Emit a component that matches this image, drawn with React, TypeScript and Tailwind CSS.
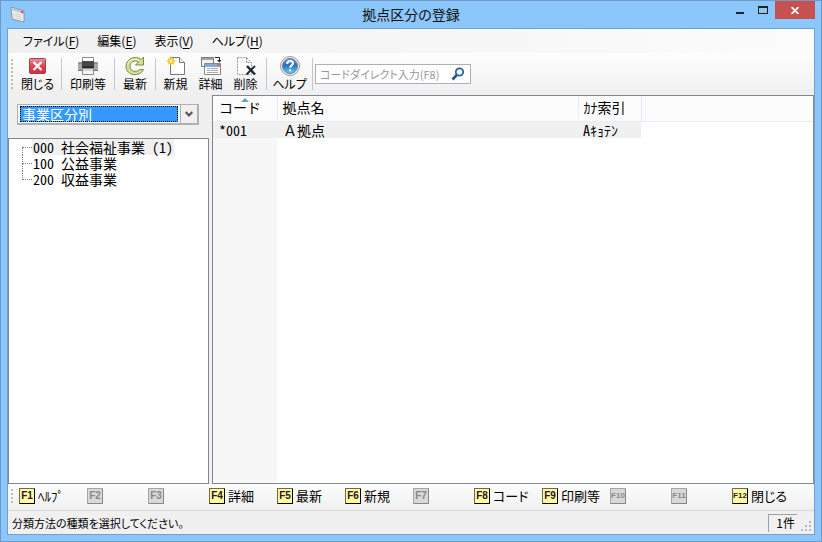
import type { ReactNode } from "react";
import { useState } from "react";
import clsx from "clsx";

const UI_FONT = "font-['Noto_Sans_CJK_JP',sans-serif] [font-feature-settings:'palt']";
const GRID_FONT = "font-['Noto_Sans_CJK_JP',monospace] [font-feature-settings:'hwid']";

const MENUS = [
  { label: "ファイル", accel: "F" },
  { label: "編集", accel: "E" },
  { label: "表示", accel: "V" },
  { label: "ヘルプ", accel: "H" },
];

const TREE = ["000 社会福祉事業 (1)", "100 公益事業", "200 収益事業"];

const FUNCTION_KEYS = [
  { key: "F1", label: "ﾍﾙﾌﾟ" },
  { key: "F2" },
  { key: "F3" },
  { key: "F4", label: "詳細" },
  { key: "F5", label: "最新" },
  { key: "F6", label: "新規" },
  { key: "F7" },
  { key: "F8", label: "コード" },
  { key: "F9", label: "印刷等" },
  { key: "F10" },
  { key: "F11" },
  { key: "F12", label: "閉じる" },
];

function AppIcon() {
  return (
    <svg width="16" height="17" viewBox="0 0 16 17" aria-hidden="true">
      <path d="M1 1l13 4v11L2 13z" fill="#f1f1ee" stroke="#8295aa" />
      <path d="M1.500 1.800l12 3.700v2.300l-12-3.600z" fill="#b9c9da" />
      <path d="M11 5.800l2.500.8" stroke="#c8556a" strokeWidth="2" />
      <path d="M4 7v5M5.500 7.500l6.500 2M5.500 9.500l6.500 2M5.500 11.500l6.500 2" stroke="#cdcdc8" fill="none" />
    </svg>
  );
}

function CloseIcon() {
  return (
    <svg width="20" height="20" viewBox="0 0 20 20" aria-hidden="true">
      <defs>
        <linearGradient id="closeRed" x1="0" y1="0" x2="0" y2="1">
          <stop offset="0" stopColor="#f0929a" />
          <stop offset=".5" stopColor="#dc4555" />
          <stop offset="1" stopColor="#e0293c" />
        </linearGradient>
      </defs>
      <rect x="1.500" y="2.500" width="16" height="15" rx="1" fill="url(#closeRed)" stroke="#94474b" />
      <path d="M5.500 6l8 8M13.500 6l-8 8" stroke="#fff" strokeWidth="2.400" />
    </svg>
  );
}

function PrinterIcon() {
  return (
    <svg width="20" height="20" viewBox="0 0 20 20" aria-hidden="true">
      <path d="M4.500 1.500h11v5h-11z" fill="#fff" stroke="#8a8a8a" />
      <path d="M1 6h18l1 1v8H0V7z" fill="#8e8e8e" />
      <path d="M0 8h4v7H0zM16 8h4v7h-4z" fill="#a9a9a9" />
      <path d="M4 5h12v6H4z" fill="#484848" />
      <path d="M4 10h12v2H4z" fill="#2e2e2e" />
      <path d="M0 14h20v1H0z" fill="#777" />
      <path d="M4.500 12.500h11v6h-11z" fill="#fafafa" stroke="#8a8a8a" />
      <path d="M5 13h10v2H5z" fill="#d6d6d6" />
    </svg>
  );
}

function RefreshIcon() {
  return (
    <svg width="20" height="20" viewBox="0 0 20 20" aria-hidden="true">
      <path
        d="M18.500 1v8H10.500l3-3C9.500 3.500 5 6 5 10.500c0 5 6.500 6.500 9.500 3h4C15 21.500 1 20 1 10.500 1 2.500 10.500-1 16 3.500z"
        fill="#d3de8e"
        stroke="#7c8848"
      />
      <path d="M2.500 9C3.500 4 9 1.500 14 4.500" stroke="#f1f7d2" fill="none" />
    </svg>
  );
}

function NewIcon() {
  return (
    <svg width="20" height="20" viewBox="0 0 20 20" aria-hidden="true">
      <path d="M4.500 1.500h9l5 5v12h-14z" fill="#fff" stroke="#777" />
      <path d="M13.500 1.500v5h5" fill="#eee" stroke="#777" />
      <path
        d="M5 0l1 3 2.500-1.500L7.500 4 10 5 7.500 6.200l1 2.500L6 7.500 5 10 4 7.500 1.500 8.700l1-2.500L0 5l2.500-1-1-2.500L4 3z"
        fill="#f8c91c"
      />
      <circle cx="5" cy="5" r="1.500" fill="#fff39a" />
    </svg>
  );
}

function DetailIcon() {
  return (
    <svg width="20" height="20" viewBox="0 0 20 20" aria-hidden="true">
      <path d="M.5 1.500h12v9H.5z" fill="#f4f4f4" stroke="#777" />
      <path d="M1 2h11v2H1z" fill="#a6a6a6" />
      <path d="M14 1.500h4.500v3" stroke="#222" fill="none" />
      <path d="M16 4h4.500l-2.200 2.500z" fill="#222" />
      <path d="M3.500 7.500h16v11h-16z" fill="#fff" stroke="#888" />
      <path d="M4 8h15v3H4z" fill="#83a9d8" />
      <path d="M16 8h3v2h-3z" fill="#dc6860" />
      <path d="M6 12.500h3M10 12.500h7M6 14.500h3M10 14.500h7M6 16.500h11" stroke="#aaa" />
    </svg>
  );
}

function DeleteIcon() {
  return (
    <svg width="20" height="20" viewBox="0 0 20 20" aria-hidden="true">
      <path d="M1.500 1.500h9l5 5v12h-14z" fill="#fbfbfb" stroke="#999" strokeDasharray="2 1" />
      <path d="M10.500 1.500v5h5" fill="none" stroke="#888" strokeDasharray="2 1" />
      <path d="M11 10l8 8.500" stroke="#172b33" strokeWidth="2.500" />
      <path d="M19 10l-8.500 8.500" stroke="#172b33" strokeWidth="1.800" />
    </svg>
  );
}

function HelpIcon() {
  return (
    <svg width="20" height="20" viewBox="0 0 20 20" aria-hidden="true">
      <defs>
        <linearGradient id="helpBlue" x1="0" y1="0" x2="0" y2="1">
          <stop offset="0" stopColor="#6d97d8" />
          <stop offset=".45" stopColor="#2b6cc4" />
          <stop offset="1" stopColor="#4fdcfb" />
        </linearGradient>
      </defs>
      <circle cx="10" cy="10" r="9.500" fill="#eee" stroke="#9a9a9a" />
      <circle cx="10" cy="10" r="7.500" fill="url(#helpBlue)" stroke="#6c8296" />
      <path d="M7.200 8c0-4 5.800-3.600 5.800-.7 0 2-2.800 2-2.800 4.500" stroke="#fff" strokeWidth="2" fill="none" />
      <path d="M9 13.300h2.200v2H9z" fill="#fff" />
    </svg>
  );
}

const TOOL_GROUPS: { padding: string; tools: { label: string; icon: ReactNode; width: string }[] }[] = [
  { padding: "px-[2px]", tools: [{ label: "閉じる", icon: <CloseIcon />, width: "w-[43px]" }] },
  { padding: "px-[4px]", tools: [{ label: "印刷等", icon: <PrinterIcon />, width: "w-[44px]" }] },
  { padding: "px-[4px]", tools: [{ label: "最新", icon: <RefreshIcon />, width: "w-[32px]" }] },
  {
    padding: "pl-[2px] pr-[3px]",
    tools: [
      { label: "新規", icon: <NewIcon />, width: "w-[35px]" },
      { label: "詳細", icon: <DetailIcon />, width: "w-[35px]" },
      { label: "削除", icon: <DeleteIcon />, width: "w-[35px]" },
    ],
  },
  { padding: "px-[4px]", tools: [{ label: "ヘルプ", icon: <HelpIcon />, width: "w-[37px]" }] },
];

function Grip({ rows }: { rows: number }) {
  return (
    <span className="flex w-[3px] shrink-0 flex-col gap-[2px]">
      {Array.from({ length: rows }, (_, i) => (
        <i key={i} className="size-[2px] bg-[#bdbdbd]" />
      ))}
    </span>
  );
}

function TitleBar() {
  return (
    <header className="flex h-[27px] shrink-0 items-start pl-[3px]">
      <div className="flex w-[84px] pt-[5px]">
        <AppIcon />
      </div>
      <h1 className="flex-1 pt-[3px] text-center text-[14px] leading-[20px] text-[#111]">拠点区分の登録</h1>
      <div className="flex">
        <button type="button" aria-label="最小化" className="flex h-[18px] w-[24px] justify-center pt-[11px]">
          <i className="h-[2px] w-[8px] bg-[#222]" />
        </button>
        <button type="button" aria-label="最大化" className="flex h-[18px] w-[22px] justify-center pt-[5px]">
          <i className="h-[8px] w-[10px] border border-t-2 border-[#222]" />
        </button>
        <button
          type="button"
          aria-label="閉じる"
          className="ml-[1px] flex h-[18px] w-[40px] items-center justify-center bg-[#c75050]"
        >
          <svg width="8" height="7" viewBox="0 0 8 7" aria-hidden="true">
            <path d="M.5 0l7 7M7.500 0l-7 7" stroke="#fff" strokeWidth="1.800" />
          </svg>
        </button>
      </div>
    </header>
  );
}

function MenuBar() {
  return (
    <nav className="flex h-[24px] shrink-0 items-center gap-[18px] bg-linear-to-r from-[#f0f0f0] to-[#fcfcfc] pl-[15px]">
      {MENUS.map((menu) => (
        <button key={menu.accel} type="button" className="text-[12px] leading-[18px] whitespace-nowrap">
          {menu.label}(<u className="underline-offset-2">{menu.accel}</u>)
        </button>
      ))}
    </nav>
  );
}

function ToolBar() {
  return (
    <div className="flex h-[42px] shrink-0 items-center bg-linear-to-b from-[#fdfdfd] via-[#f7f7f7] to-[#efefef] pl-[3px]">
      <Grip rows={8} />
      {TOOL_GROUPS.map(({ padding, tools }) => (
        <div key={tools[0].label} className="flex items-center">
          <div className={clsx("flex pb-[2px]", padding)}>
            {tools.map((tool) => (
              <button
                key={tool.label}
                type="button"
                className={clsx("flex flex-col items-center text-[12px] leading-[15px] whitespace-nowrap", tool.width)}
              >
                {tool.icon}
                {tool.label}
              </button>
            ))}
          </div>
          <i className="h-[32px] w-[1px] bg-[#c5c5c5]" />
        </div>
      ))}
      <label className="ml-[2px] flex h-[20px] w-[156px] items-center border border-[#adb0b5] bg-white pr-[5px] pl-[4px]">
        <input
          type="text"
          aria-label="コードダイレクト入力"
          placeholder="コードダイレクト入力(F8)"
          className="min-w-0 flex-1 text-[11px] leading-[16px] outline-none placeholder:text-[#999]"
        />
        <svg width="14" height="14" viewBox="0 0 14 14" aria-hidden="true">
          <circle cx="8.500" cy="5" r="3.700" fill="#fff" stroke="#2a62ad" strokeWidth="1.800" />
          <path d="M5.800 8L1.500 12.500" stroke="#24539a" strokeWidth="2.600" />
        </svg>
      </label>
    </div>
  );
}

function CategoryPane() {
  const [selected, setSelected] = useState(0);

  return (
    <aside className={clsx("flex w-[201px] shrink-0 flex-col", GRID_FONT)}>
      <div className="h-[43px] pt-[9px] pr-[10px] pl-[9px]">
        <div className="flex h-[21px] border border-r-2 border-b-2 border-[#adb0b5] bg-white">
          <select
            aria-label="分類方法"
            className="mx-[2px] my-[1px] min-w-0 flex-1 appearance-none bg-[#3399ff] pl-[2px] text-[14px] leading-[16px] text-white outline-1 -outline-offset-1 outline-black outline-dotted"
          >
            <option>事業区分別</option>
          </select>
          <span className="pointer-events-none flex w-[17px] items-center justify-center border-l border-[#adb0b5] bg-[#efefef]">
            <svg width="8" height="7" viewBox="0 0 8 7" aria-hidden="true">
              <path d="M.7 1L4 4.500 7.300 1" fill="none" stroke="#555" strokeWidth="2.200" />
            </svg>
          </span>
        </div>
      </div>
      <ul className="flex-1 border border-[#828790] bg-white pl-[13px] text-[14px]">
        {TREE.map((node, i) => (
          <li key={node} className="flex h-[16px]">
            <span className="flex w-[10px] flex-col">
              <i className={clsx("h-[9px] border-b border-dotted border-[#808080]", i > 0 && "border-l")} />
              <i className={clsx("h-[7px] border-dotted border-[#808080]", i < TREE.length - 1 && "border-l")} />
            </span>
            <button
              type="button"
              onClick={() => setSelected(i)}
              className={clsx("px-[1px] leading-[16px] whitespace-pre", i === selected && "bg-[#f0f0f0]")}
            >
              {node}
            </button>
          </li>
        ))}
      </ul>
    </aside>
  );
}

function ListPane() {
  return (
    <section className={clsx("flex min-w-0 flex-1 flex-col border border-[#828790] bg-white", GRID_FONT)}>
      <table className="w-full table-fixed border-collapse text-left text-[14px] leading-[16px]">
        <colgroup>
          <col className="w-[64px]" />
          <col className="w-[301px]" />
          <col className="w-[63px]" />
          <col />
        </colgroup>
        <thead>
          <tr className="h-[25px] border-b border-[#e2ecfa] bg-[#fcfcfc]">
            <th className="relative border-r border-[#e2ecfa] pb-[2px] pl-[6px] font-normal">
              <svg className="absolute top-[2px] left-[28px]" width="8" height="4" viewBox="0 0 8 4" aria-hidden="true">
                <path d="M4 0l4 4H0z" fill="#6fa0b8" />
              </svg>
              コード
            </th>
            <th className="border-r border-[#e2ecfa] pb-[2px] pl-[5px] font-normal">拠点名</th>
            <th className="border-r border-[#e2ecfa] pb-[2px] pl-[5px] font-normal">ｶﾅ索引</th>
            <th />
          </tr>
        </thead>
        <tbody>
          <tr className="h-[16px]">
            <td className="bg-[#f0f0f0] pl-[6px]">*001</td>
            <td className="bg-[#f0f0f0] pl-[6px] [font-feature-settings:normal]">Ａ拠点</td>
            <td className="bg-[#f0f0f0] pl-[5px]">Aｷｮﾃﾝ</td>
            <td />
          </tr>
        </tbody>
      </table>
      <div className="w-[64px] flex-1 bg-[#f7f7f7]" />
    </section>
  );
}

function FunctionKeyBar() {
  return (
    <div className="flex h-[27px] shrink-0 items-center border-b border-[#d7d7d7] bg-linear-to-b from-[#fcfcfc] to-[#f0f0f0] pb-[2px] pl-[3px]">
      <Grip rows={4} />
      <div className="flex pl-[5px]">
        {FUNCTION_KEYS.map(({ key, label }) => (
          <button
            key={key}
            type="button"
            disabled={!label}
            className={clsx("flex items-center gap-[3px] whitespace-nowrap", label ? "w-[68px]" : "w-[61px]")}
          >
            <kbd
              className={clsx(
                "flex size-[16px] shrink-0 items-center justify-center rounded-[1px] border font-['Liberation_Sans',sans-serif] leading-[12px] font-bold",
                key.length > 2 ? "text-[8px]" : "text-[10px]",
                label
                  ? "border-[#6b6b4a] border-r-black border-b-black bg-[#ffffa0] text-[#301030]"
                  : "border-[#a5a5a5] border-r-[#888] border-b-[#888] bg-[#d8d8d8] text-[#888]",
              )}
            >
              {key}
            </kbd>
            <span className="text-[13px] leading-[18px]">{label}</span>
          </button>
        ))}
      </div>
    </div>
  );
}

function StatusBar() {
  return (
    <footer className="flex h-[23px] shrink-0 items-center justify-between pl-[4px] text-[12px] leading-[16px]">
      <p className="text-[11px]">分類方法の種類を選択してください。</p>
      <div className="flex items-end gap-[4px] pr-[2px]">
        <output className="h-[18px] w-[29px] border-t border-l border-[#a0a0a0] pr-[2px] text-right">1件</output>
        <svg width="11" height="11" viewBox="0 0 11 11" fill="#b8b8b8" aria-hidden="true">
          <path d="M8 0h2v2H8zM4 4h2v2H4zM8 4h2v2H8zM0 8h2v2H0zM4 8h2v2H4zM8 8h2v2H8z" />
        </svg>
      </div>
    </footer>
  );
}

export default function App() {
  return (
    <div
      className={clsx(
        "flex min-h-screen flex-col border border-[#6c9bc9] bg-[#8cc7fb] px-[6px] pb-[6px] text-black",
        UI_FONT,
      )}
    >
      <TitleBar />
      <main className="flex flex-1 flex-col border border-[#70a0cd] bg-[#f0f0f0]">
        <MenuBar />
        <ToolBar />
        <div className="flex flex-1 gap-[3px]">
          <CategoryPane />
          <ListPane />
        </div>
        <FunctionKeyBar />
        <StatusBar />
      </main>
    </div>
  );
}
